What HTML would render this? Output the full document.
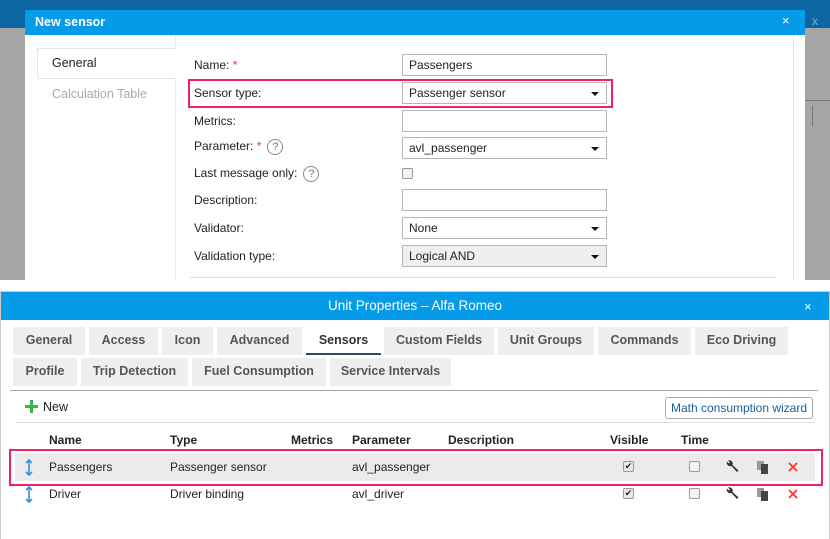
<!DOCTYPE html>
<html><head><meta charset="utf-8"><style>
*{margin:0;padding:0;box-sizing:border-box}
body{width:830px;height:539px;overflow:hidden;background:#fff;font-family:"Liberation Sans",sans-serif;font-size:12px;color:#222;position:relative}
.a{position:absolute}
.inp{position:absolute;left:402px;width:205px;height:22px;border:1px solid #b5b5b5;background:#fff;padding-left:6px;line-height:20px;font-size:12px}
.dd:after{content:"";position:absolute;right:7px;top:9px;border-left:4px solid transparent;border-right:4px solid transparent;border-top:4px solid #111}
.lbl{position:absolute;left:194px;font-size:12px}
.q{display:inline-block;width:16px;height:16px;border:1px solid #888;border-radius:50%;text-align:center;line-height:14px;font-size:11px;color:#777;margin-left:6px;vertical-align:middle}
.star{color:#e33}
.tab{position:absolute;height:28px;background:#efefef;color:#555;font-weight:bold;font-size:12.5px;text-align:center;line-height:27px}
.th{position:absolute;top:433px;font-weight:bold;font-size:12px}
.cb{position:absolute;width:11px;height:11px;border:1px solid #999;border-radius:2px;background:#f3f3f3}
.ck{position:absolute;width:11px;height:11px;border:1px solid #999;border-radius:2px;background:#e8e8e8;font-size:9px;line-height:9px;text-align:center;color:#222}
</style></head><body>
<div class="a" style="left:0;top:0;width:830px;height:280px;background:#a6a6a6"></div>
<div class="a" style="left:0;top:0;width:830px;height:28px;background:#0c66a2"></div>
<div class="a" style="left:812px;top:14px;color:#8ab;font-size:12px">x</div>
<div class="a" style="left:805px;top:100px;width:25px;height:1px;background:#777"></div>
<div class="a" style="left:812px;top:106px;width:1px;height:20px;background:#777"></div>
<div class="a" style="left:25px;top:10px;width:780px;height:270px;background:#fff"></div>
<div class="a" style="left:25px;top:10px;width:780px;height:25px;background:#069be9"></div>
<div class="a" style="left:35px;top:15px;color:#fff;font-weight:bold;font-size:12.5px">New sensor</div>
<div class="a" style="left:782px;top:13px;color:#fff;font-size:13px">×</div>
<div class="a" style="left:793px;top:35px;width:1px;height:245px;background:#e4e4e4"></div>
<div class="a" style="left:175px;top:35px;width:1px;height:245px;background:#e8e8e8"></div>
<div class="a" style="left:37px;top:48px;width:139px;height:31px;border:1px solid #e6e6e6;border-right:none;background:#fff"></div>
<div class="a" style="left:52px;top:56px;font-size:12.5px">General</div>
<div class="a" style="left:52px;top:87px;font-size:12.5px;color:#aaa">Calculation Table</div>
<div class="lbl" style="top:58px">Name: <span class="star">*</span></div>
<div class="inp" style="top:54px">Passengers</div>
<div class="a" style="left:188px;top:79px;width:425px;height:29px;border:2px solid #f0245a"></div>
<div class="lbl" style="top:86px">Sensor type:</div>
<div class="inp dd" style="top:82px">Passenger sensor</div>
<div class="lbl" style="top:114px">Metrics:</div>
<div class="inp" style="top:110px"></div>
<div class="lbl" style="top:139px">Parameter: <span class="star">*</span><span class="q">?</span></div>
<div class="inp dd" style="top:137px">avl_passenger</div>
<div class="lbl" style="top:166px">Last message only:<span class="q">?</span></div>
<div class="cb" style="left:402px;top:168px"></div>
<div class="lbl" style="top:193px">Description:</div>
<div class="inp" style="top:189px"></div>
<div class="lbl" style="top:221px">Validator:</div>
<div class="inp dd" style="top:217px">None</div>
<div class="lbl" style="top:249px">Validation type:</div>
<div class="inp dd" style="top:245px;background:#efefef">Logical AND</div>
<div class="a" style="left:190px;top:277px;width:587px;height:1px;background:#ddd"></div>

<div class="a" style="left:0;top:291px;width:830px;height:248px;border:1px solid #ccc;border-bottom:none"></div>
<div class="a" style="left:1px;top:292px;width:828px;height:28px;background:#069be9"></div>
<div class="a" style="left:0;top:298px;width:830px;text-align:center;color:#fff;font-size:13.5px">Unit Properties – Alfa Romeo</div>
<div class="a" style="left:804px;top:299px;color:#fff;font-size:13px">×</div>
<div class="tab" style="left:13px;top:327px;width:72px">General</div>
<div class="tab" style="left:89px;top:327px;width:69px">Access</div>
<div class="tab" style="left:162px;top:327px;width:51px">Icon</div>
<div class="tab" style="left:217px;top:327px;width:85px">Advanced</div>
<div class="tab" style="left:306px;top:327px;width:75px;background:#fff;color:#333;border-bottom:2px solid #1f4e79">Sensors</div>
<div class="tab" style="left:384px;top:327px;width:110px">Custom Fields</div>
<div class="tab" style="left:498px;top:327px;width:96px">Unit Groups</div>
<div class="tab" style="left:598px;top:327px;width:93px">Commands</div>
<div class="tab" style="left:695px;top:327px;width:93px">Eco Driving</div>
<div class="tab" style="left:13px;top:358px;width:64px">Profile</div>
<div class="tab" style="left:81px;top:358px;width:107px">Trip Detection</div>
<div class="tab" style="left:192px;top:358px;width:134px">Fuel Consumption</div>
<div class="tab" style="left:330px;top:358px;width:121px">Service Intervals</div>
<div class="a" style="left:10px;top:390px;width:808px;height:1px;background:#aaa"></div>
<svg class="a" style="left:25px;top:400px" width="13" height="13"><path d="M6.5 0v13M0 6.5h13" stroke="#3bb54a" stroke-width="3"/></svg>
<div class="a" style="left:43px;top:400px;font-size:12.5px">New</div>
<div class="a" style="left:665px;top:397px;width:148px;height:22px;border:1px solid #aaa;border-radius:3px;color:#1a5fa0;font-size:12px;text-align:center;line-height:20px">Math consumption wizard</div>
<div class="a" style="left:15px;top:422px;width:800px;height:1px;background:#ddd"></div>
<div class="th" style="left:49px">Name</div>
<div class="th" style="left:170px">Type</div>
<div class="th" style="left:291px">Metrics</div>
<div class="th" style="left:352px">Parameter</div>
<div class="th" style="left:448px">Description</div>
<div class="th" style="left:610px">Visible</div>
<div class="th" style="left:681px">Time</div>
<div class="a" style="left:15px;top:453px;width:800px;height:28px;background:#ebebeb"></div>
<div class="a" style="left:9px;top:449px;width:814px;height:37px;border:2px solid #f0245a"></div>

<svg class="a" style="left:25px;top:459px" width="8" height="17"><path d="M4 1v15M1 4l3-3 3 3M1 13l3 3 3-3" stroke="#2e8fe0" stroke-width="1.6" fill="none"/></svg>
<div class="a" style="left:49px;top:460px">Passengers</div>
<div class="a" style="left:170px;top:460px">Passenger sensor</div>
<div class="a" style="left:352px;top:460px">avl_passenger</div>
<div class="ck" style="left:623px;top:461px">✔</div>
<div class="cb" style="left:689px;top:461px"></div>
<svg class="a" style="left:726px;top:460px" width="13" height="13"><path d="M1 1.5a3.5 3.5 0 0 0 4.5 4.5l5.5 6 1.5-1.5-6-5.5A3.5 3.5 0 0 0 2 0.5l2 2-1 1z" fill="#333"/></svg>
<svg class="a" style="left:757px;top:461px" width="12" height="13"><rect x="0" y="0" width="7" height="9" fill="#999"/><rect x="4" y="3" width="7" height="10" fill="#444"/></svg>
<svg class="a" style="left:788px;top:462px" width="10" height="10"><path d="M1 1l8 8M9 1l-8 8" stroke="#f33" stroke-width="1.8"/></svg>

<svg class="a" style="left:25px;top:486px" width="8" height="17"><path d="M4 1v15M1 4l3-3 3 3M1 13l3 3 3-3" stroke="#2e8fe0" stroke-width="1.6" fill="none"/></svg>
<div class="a" style="left:49px;top:487px">Driver</div>
<div class="a" style="left:170px;top:487px">Driver binding</div>
<div class="a" style="left:352px;top:487px">avl_driver</div>
<div class="ck" style="left:623px;top:488px">✔</div>
<div class="cb" style="left:689px;top:488px"></div>
<svg class="a" style="left:726px;top:487px" width="13" height="13"><path d="M1 1.5a3.5 3.5 0 0 0 4.5 4.5l5.5 6 1.5-1.5-6-5.5A3.5 3.5 0 0 0 2 0.5l2 2-1 1z" fill="#333"/></svg>
<svg class="a" style="left:757px;top:488px" width="12" height="13"><rect x="0" y="0" width="7" height="9" fill="#999"/><rect x="4" y="3" width="7" height="10" fill="#444"/></svg>
<svg class="a" style="left:788px;top:489px" width="10" height="10"><path d="M1 1l8 8M9 1l-8 8" stroke="#f33" stroke-width="1.8"/></svg>
</body></html>
